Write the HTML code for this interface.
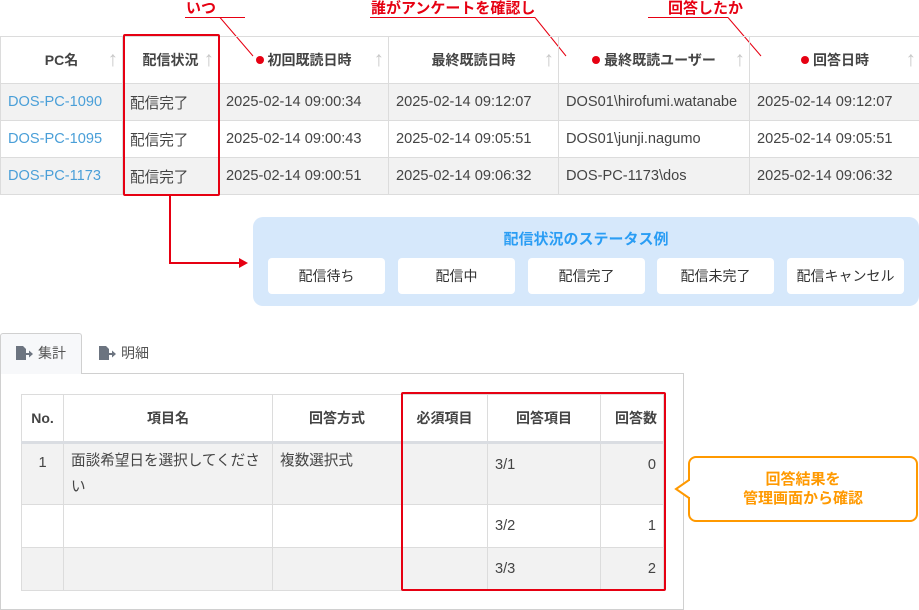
<!DOCTYPE html>
<html><head><meta charset="utf-8"><style>
*{box-sizing:border-box;margin:0;padding:0}
body{width:919px;height:610px;position:relative;background:#fff;font-family:"Liberation Sans","Noto Sans CJK JP",sans-serif;color:#333;font-size:13px;overflow:hidden}
.a{position:absolute}
table{border-collapse:collapse;position:absolute;table-layout:fixed}
td,th{border:1px solid #dcdcdc;font-size:14.6px;color:#444}
.t1 th{height:47px;font-weight:bold;position:relative;text-align:center;font-size:14px}
.t1 td{height:37px;padding-left:7px;white-space:nowrap}
.t1 tr.g td{background:#f2f2f2}
.ar{position:absolute;right:4px;top:11px;color:#c8c8c8;font-weight:normal;font-size:21px}
.lk{color:#4a9fd8}
.ann{position:absolute;color:#e60012;font-weight:bold;font-size:15px;line-height:16px}
.dot{display:inline-block;width:8px;height:8px;border-radius:50%;background:#e60012;margin-right:4px;vertical-align:1px}
.btn{position:absolute;top:258px;width:117px;height:36px;background:#fff;border-radius:4px;text-align:center;line-height:36px;font-size:14px;color:#333}
.t2 th{height:48px;font-weight:bold;border-bottom:3px solid #dadde2;font-size:14px}
.t2 td{vertical-align:top;padding:8px 7px;line-height:26px}
.t2 tr.g td{background:#f2f2f2}
.tab{position:absolute;top:343px;color:#555;font-size:14px}
.tab svg{vertical-align:-2px;margin-right:5px}
</style></head><body>
<div class="ann" style="left:186px;top:1px">いつ</div>
<div class="ann" style="left:371px;top:1px">誰がアンケートを確認し</div>
<div class="ann" style="left:668px;top:1px">回答したか</div>
<svg class="a" style="left:0;top:0" width="919" height="70">
<g stroke="#e60012" stroke-width="1" fill="none">
<path d="M185 17.5H245M220 17.5L253 56"/>
<path d="M370 17.5H535M535 17.5L566 56"/>
<path d="M648 17.5H728M728 17.5L761 56"/>
</g></svg>
<table class="t1" style="left:0;top:36px;width:920px">
<colgroup><col style="width:122px"><col style="width:96px"><col style="width:170px"><col style="width:170px"><col style="width:191px"><col style="width:171px"></colgroup>
<tr><th>PC名<span class="ar">↑</span></th><th>配信状況<span class="ar">↑</span></th><th><span class="dot"></span>初回既読日時<span class="ar">↑</span></th><th>最終既読日時<span class="ar">↑</span></th><th><span class="dot"></span>最終既読ユーザー<span class="ar">↑</span></th><th><span class="dot"></span>回答日時<span class="ar">↑</span></th></tr>
<tr class="g"><td class="lk">DOS-PC-1090</td><td>配信完了</td><td>2025-02-14 09:00:34</td><td>2025-02-14 09:12:07</td><td>DOS01\hirofumi.watanabe</td><td>2025-02-14 09:12:07</td></tr>
<tr><td class="lk">DOS-PC-1095</td><td>配信完了</td><td>2025-02-14 09:00:43</td><td>2025-02-14 09:05:51</td><td>DOS01\junji.nagumo</td><td>2025-02-14 09:05:51</td></tr>
<tr class="g"><td class="lk">DOS-PC-1173</td><td>配信完了</td><td>2025-02-14 09:00:51</td><td>2025-02-14 09:06:32</td><td>DOS-PC-1173\dos</td><td>2025-02-14 09:06:32</td></tr>
</table>
<div class="a" style="left:123px;top:34px;width:97px;height:162px;border:2px solid #e60012;border-radius:2px"></div>
<svg class="a" style="left:0;top:190px" width="260" height="80"><path d="M170 6V73H240" stroke="#e60012" stroke-width="2" fill="none"/><path d="M239 68L248 73L239 78Z" fill="#e60012"/></svg>
<div class="a" style="left:253px;top:217px;width:666px;height:89px;background:#d6e8fb;border-radius:10px"></div>
<div class="a" style="left:253px;top:228px;width:666px;text-align:center;color:#2a9df4;font-weight:bold;font-size:15px">配信状況のステータス例</div>
<div class="btn" style="left:268px">配信待ち</div>
<div class="btn" style="left:398px">配信中</div>
<div class="btn" style="left:528px">配信完了</div>
<div class="btn" style="left:657px">配信未完了</div>
<div class="btn" style="left:787px">配信キャンセル</div>
<div class="a" style="left:0;top:373px;width:684px;height:237px;border:1px solid #d0d0d0"></div>
<div class="a" style="left:0;top:333px;width:82px;height:41px;background:#f7f8fa;border:1px solid #d0d0d0;border-bottom:none;border-radius:3px 3px 0 0"></div>
<svg width="0" height="0" style="position:absolute"><defs><symbol id="ic" viewBox="0 0 17 14"><path d="M0 0H7L10 3V14H0Z" fill="#6c7480"/><path d="M10 7H13V4.5L17 8L13 11.5V9H10Z" fill="#6c7480"/></symbol></defs></svg>
<div class="tab" style="left:16px"><svg width="17" height="14"><use href="#ic"/></svg>集計</div>
<div class="tab" style="left:99px"><svg width="17" height="14"><use href="#ic"/></svg>明細</div>
<table class="t2" style="left:21px;top:394px;width:643px">
<colgroup><col style="width:42px"><col style="width:209px"><col style="width:129px"><col style="width:86px"><col style="width:113px"><col style="width:63px"></colgroup>
<tr><th>No.</th><th>項目名</th><th>回答方式</th><th>必須項目</th><th>回答項目</th><th style="text-align:right;padding-right:6px">回答数</th></tr>
<tr class="g"><td style="height:58px;text-align:center;padding:6px 0">1</td><td style="padding:4px 7px">面談希望日を選択してください</td><td style="padding:4px 7px">複数選択式</td><td></td><td>3/1</td><td style="text-align:right">0</td></tr>
<tr><td style="height:43px"></td><td></td><td></td><td></td><td>3/2</td><td style="text-align:right">1</td></tr>
<tr class="g"><td style="height:43px"></td><td></td><td></td><td></td><td>3/3</td><td style="text-align:right">2</td></tr>
</table>
<div class="a" style="left:401px;top:392px;width:265px;height:199px;border:2px solid #e60012;border-radius:2px"></div>
<div class="a" style="left:688px;top:456px;width:230px;height:66px;border:2px solid #f90;border-radius:8px;text-align:center;color:#f90;font-weight:bold;font-size:15px;line-height:19px;padding-top:12px">回答結果を<br>管理画面から確認</div>
<svg class="a" style="left:672px;top:478px" width="20" height="24"><path d="M17 2L4 11L17 20" stroke="#f90" stroke-width="2" fill="#fff"/><rect x="17" y="3" width="3" height="16" fill="#fff"/></svg>
</body></html>
